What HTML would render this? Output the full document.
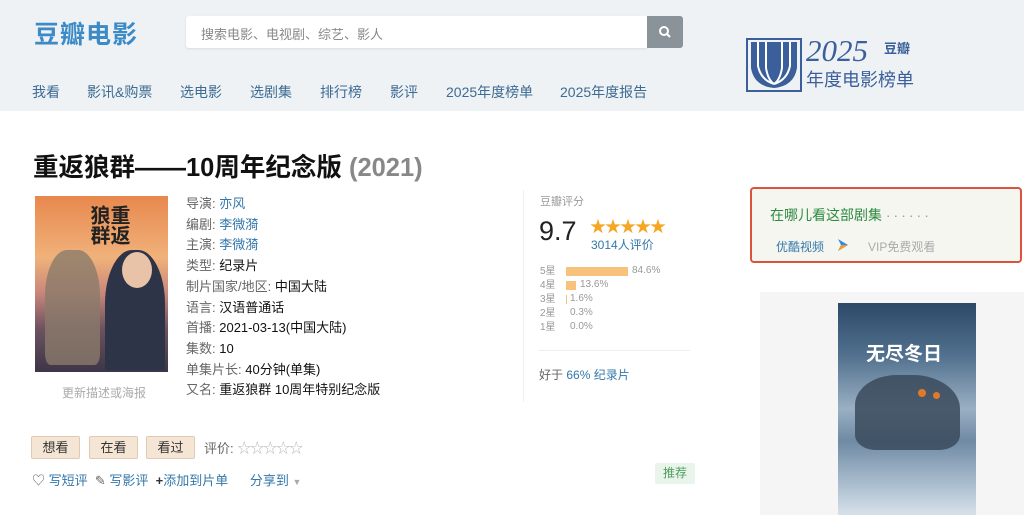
<!DOCTYPE html>
<html><head><meta charset="utf-8"><style>
*{margin:0;padding:0;box-sizing:border-box}
body{width:1024px;height:515px;overflow:hidden;background:#fff;font-family:"Liberation Sans","Noto Sans CJK SC",sans-serif;font-size:13px;color:#111;position:relative}
.a{position:absolute;white-space:nowrap}
.hd{position:absolute;left:0;top:0;width:1024px;height:111px;background:#eef2f5}
.nav{color:#3d6b93;font-size:14px;top:82px}
.lk{color:#3377aa}
.g{color:#666}
.btn{position:absolute;top:436px;height:23px;width:49px;background:#f5e5d4;border:1px solid #e0cbb2;border-radius:2px;font-size:13px;text-align:center;line-height:21px;color:#333}
.bar{position:absolute;height:9px;background:#f7c27c}
.rl{font-size:10px;color:#999}
</style></head><body>
<div class="hd"></div>
<div class="a" style="left:34px;top:15px;font-size:25px;font-weight:bold;color:#3c8bc7;letter-spacing:1px">豆瓣电影</div>
<div class="a" style="left:186px;top:16px;width:461px;height:32px;background:#fff;border-radius:3px 0 0 3px;box-shadow:0 1px 2px #d8dde2"></div>
<div class="a" style="left:201px;top:24px;font-size:13px;color:#888">搜索电影、电视剧、综艺、影人</div>
<div class="a" style="left:647px;top:16px;width:36px;height:32px;background:#8a9399;border-radius:0 3px 3px 0"></div>
<svg class="a" style="left:657px;top:24px" width="16" height="16"><circle cx="7" cy="7" r="4" stroke="#fff" stroke-width="2" fill="none"/><line x1="10" y1="10" x2="13" y2="13" stroke="#fff" stroke-width="2"/></svg>
<div class="a nav" style="left:32px">我看</div>
<div class="a nav" style="left:87px">影讯&amp;购票</div>
<div class="a nav" style="left:180px">选电影</div>
<div class="a nav" style="left:250px">选剧集</div>
<div class="a nav" style="left:320px">排行榜</div>
<div class="a nav" style="left:390px">影评</div>
<div class="a nav" style="left:446px">2025年度榜单</div>
<div class="a nav" style="left:560px">2025年度报告</div>
<svg class="a" style="left:746px;top:38px" width="56" height="54"><rect x="1" y="1" width="54" height="52" fill="none" stroke="#3a5f9a" stroke-width="2"/><path d="M5 4 V30 Q8 48 28 50 Q48 48 51 30 V4" fill="#3a5f9a"/><path d="M12 4 V28 Q15 42 28 46 M20 4 V30 Q22 42 28 46 M44 4 V28 Q41 42 28 46 M36 4 V30 Q34 42 28 46" stroke="#fff" stroke-width="2" fill="none"/></svg>
<div class="a" style="left:806px;top:33px;font-size:31px;font-style:italic;color:#3a5f9a;font-family:'Liberation Serif',serif">2025</div>
<div class="a" style="left:884px;top:38px;font-size:13px;font-weight:bold;color:#3a5f9a">豆瓣</div>
<div class="a" style="left:806px;top:66px;font-size:18px;color:#3a5f9a">年度电影榜单</div>
<div class="a" style="left:33px;top:147px;font-size:25.5px;font-weight:bold;color:#111">重返狼群——10周年纪念版 <span style="color:#888">(2021)</span></div>
<div class="a" style="left:35px;top:196px;width:133px;height:176px;background:linear-gradient(180deg,#e8884e 0%,#f0b27a 35%,#c9877a 55%,#6e5360 75%,#3d3548 100%)"></div>
<div class="a" style="left:45px;top:250px;width:55px;height:115px;background:#8a7a6a;border-radius:40% 40% 10% 10%;opacity:.8"></div>
<div class="a" style="left:105px;top:250px;width:60px;height:120px;background:#2e3448;border-radius:45% 45% 0 0"></div>
<div class="a" style="left:122px;top:252px;width:30px;height:36px;background:#e9c3a8;border-radius:50%"></div>
<div class="a" style="left:88px;top:205px;font-size:20px;font-weight:bold;color:#222;writing-mode:vertical-rl;line-height:20px">重返<br>狼群</div>
<div class="a" style="left:62px;top:384px;font-size:12px;color:#aaa">更新描述或海报</div>
<div class="a" style="left:186px;top:194px;line-height:20.7px;font-size:13px">
<div><span class="g">导演:</span> <span class="lk">亦风</span></div>
<div><span class="g">编剧:</span> <span class="lk">李微漪</span></div>
<div><span class="g">主演:</span> <span class="lk">李微漪</span></div>
<div><span class="g">类型:</span> 纪录片</div>
<div><span class="g">制片国家/地区:</span> 中国大陆</div>
<div><span class="g">语言:</span> 汉语普通话</div>
<div><span class="g">首播:</span> 2021-03-13(中国大陆)</div>
<div><span class="g">集数:</span> 10</div>
<div><span class="g">单集片长:</span> 40分钟(单集)</div>
<div><span class="g">又名:</span> 重返狼群 10周年特别纪念版</div>
</div>
<div class="a" style="left:523px;top:190px;width:1px;height:212px;background:#eee"></div>
<div class="a" style="left:540px;top:193px;font-size:11px;color:#999">豆瓣评分</div>
<div class="a" style="left:539px;top:216px;font-size:27px;color:#222">9.7</div>
<div class="a" style="left:590px;top:213px;font-size:16px;color:#f5a623;letter-spacing:-1px">★★★★★</div>
<div class="a lk" style="left:591px;top:236px;font-size:12px">3014人评价</div>
<div class="a rl" style="left:540px;top:265px;line-height:14px">5星<br>4星<br>3星<br>2星<br>1星</div>
<div class="bar" style="left:566px;top:267px;width:62px"></div>
<div class="bar" style="left:566px;top:281px;width:10px"></div>
<div class="bar" style="left:566px;top:295px;width:1px"></div>
<div class="a rl" style="left:632px;top:265px">84.6%</div>
<div class="a rl" style="left:580px;top:279px">13.6%</div>
<div class="a rl" style="left:570px;top:293px">1.6%</div>
<div class="a rl" style="left:570px;top:307px">0.3%</div>
<div class="a rl" style="left:570px;top:321px">0.0%</div>
<div class="a" style="left:539px;top:350px;width:151px;height:1px;background:#eee"></div>
<div class="a" style="left:539px;top:366px;font-size:12px;color:#666">好于 <span class="lk">66% 纪录片</span></div>
<div class="btn" style="left:31px">想看</div>
<div class="btn" style="left:89px">在看</div>
<div class="btn" style="left:146px">看过</div>
<div class="a" style="left:204px;top:438px;font-size:13px;color:#666">评价: <span style="color:#bbb;font-size:14px;letter-spacing:-1px">☆☆☆☆☆</span></div>
<div class="a lk" style="left:32px;top:470px;font-size:13px"><span class="g">♡</span> 写短评 &nbsp;<span class="g">✎</span> 写影评 &nbsp;<b style="color:#333">+</b>添加到片单 &nbsp;&nbsp;&nbsp;&nbsp;&nbsp;分享到 <span style="color:#aaa;font-size:9px">▼</span></div>
<div class="a" style="left:655px;top:463px;width:40px;height:21px;background:#e9f4ea;color:#4f9d5e;font-size:12px;text-align:center;line-height:21px;border-radius:2px">推荐</div>
<div class="a" style="left:750px;top:187px;width:272px;height:76px;background:#f6f6f1;border:2px solid #d9533f;border-radius:4px"></div>
<div class="a" style="left:770px;top:205px;font-size:14px;color:#2c8a3f">在哪儿看这部剧集 <span style="color:#999;letter-spacing:3px">······</span></div>
<div class="a lk" style="left:776px;top:238px;font-size:12px">优酷视频</div>
<svg class="a" style="left:836px;top:237px" width="14" height="16"><path d="M2 2 L12 8 L2 14 L5 8 Z" fill="#2b8cf0"/><path d="M5 8 L12 8 L2 14Z" fill="#f39a2b"/></svg>
<div class="a" style="left:868px;top:238px;font-size:12px;color:#aaa">VIP免费观看</div>
<div class="a" style="left:760px;top:292px;width:264px;height:223px;background:#f5f5f5"></div>
<div class="a" style="left:838px;top:303px;width:138px;height:212px;background:linear-gradient(180deg,#2c4a68 0%,#52718e 25%,#9ab0c3 50%,#6f8aa4 65%,#a9bccd 85%,#d7e1ea 100%)"></div>
<div class="a" style="left:855px;top:375px;width:105px;height:75px;background:#3a4a5c;border-radius:40% 45% 20% 20%;opacity:.85"></div>
<div class="a" style="left:918px;top:389px;width:8px;height:8px;background:#e07a2a;border-radius:50%"></div>
<div class="a" style="left:933px;top:392px;width:7px;height:7px;background:#e07a2a;border-radius:50%"></div>
<div class="a" style="left:866px;top:339px;font-size:19px;font-weight:bold;color:#fff">无尽冬日</div>
</body></html>
